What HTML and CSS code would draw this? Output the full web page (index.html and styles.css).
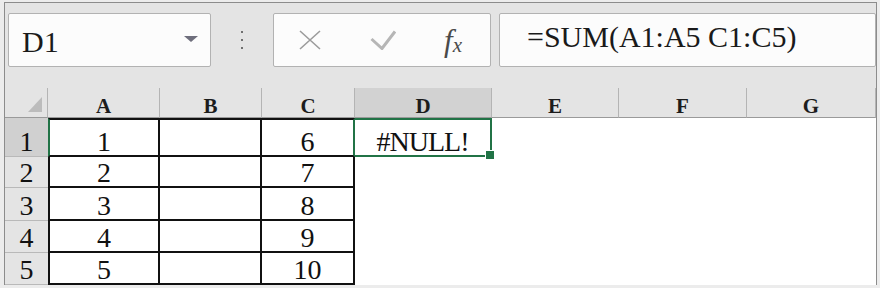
FILE: index.html
```html
<!DOCTYPE html>
<html lang="zh-CN">
  <head>
    <meta charset="UTF-8" />
    <meta name="viewport" content="width=device-width, initial-scale=1.0" />
    <title>#NULL! 错误</title>
    <link rel="stylesheet" href="styles.css">
  </head>
  <body>
    <div class="app">
      <!-- 编辑栏 -->
      <div class="toolbar">
        <div class="namebox">
          <span class="name">D1</span>
          <span class="caret"></span>
        </div>
        <div class="grip"><i></i><i></i><i></i></div>
        <div class="fxbox">
          <svg class="ico-x" width="22" height="20" viewBox="0 0 22 20">
            <path d="M1 1 L21 19 M21 1 L1 19" stroke="#9c9c9c" stroke-width="1.6" fill="none" />
          </svg>
          <svg class="ico-ok" width="26" height="20" viewBox="0 0 26 20">
            <polyline points="1.5,9 12,18.5 25,1.5" stroke="#b6b6b6" stroke-width="3" fill="none" />
          </svg>
          <span class="fx"><i>f</i><i class="sub">x</i></span>
        </div>
        <div class="formula">=SUM(A1:A5 C1:C5)</div>
      </div>

      <!-- 表格 -->
      <div class="sheet">
        <div class="ch corner"><span class="tri"></span></div>
        <div class="ch">A</div>
        <div class="ch">B</div>
        <div class="ch">C</div>
        <div class="ch on">D</div>
        <div class="ch">E</div>
        <div class="ch">F</div>
        <div class="ch">G</div>

        <div class="rh on">1</div>
        <div class="c top first hl">1</div>
        <div class="c top"></div>
        <div class="c top next-sel">6</div>
        <div class="e sel">#NULL!<span class="handle"></span></div>
        <div class="e"></div>
        <div class="e"></div>
        <div class="e"></div>

        <div class="rh">2</div>
        <div class="c first">2</div>
        <div class="c"></div>
        <div class="c">7</div>
        <div class="e"></div>
        <div class="e"></div>
        <div class="e"></div>
        <div class="e"></div>

        <div class="rh">3</div>
        <div class="c first">3</div>
        <div class="c"></div>
        <div class="c">8</div>
        <div class="e"></div>
        <div class="e"></div>
        <div class="e"></div>
        <div class="e"></div>

        <div class="rh">4</div>
        <div class="c first">4</div>
        <div class="c"></div>
        <div class="c">9</div>
        <div class="e"></div>
        <div class="e"></div>
        <div class="e"></div>
        <div class="e"></div>

        <div class="rh">5</div>
        <div class="c first">5</div>
        <div class="c"></div>
        <div class="c">10</div>
        <div class="e"></div>
        <div class="e"></div>
        <div class="e"></div>
        <div class="e"></div>
      </div>
    </div>
  </body>
</html>
```

FILE: styles.css
```css
body {
  margin: 0;
  background-color: #ececec;
  font-family: "Liberation Serif", serif;
  color: #111;
}

.app {
  margin: 2px 0 0 4px;
  width: 871px;
  border: 1px solid #8c8c8c;
  border-bottom: none;
  background-color: #e4e4e4;
}

/* 编辑栏 */
.toolbar {
  display: flex;
  align-items: flex-start;
  height: 85px;
  padding: 10px 0 0 3px;
  box-sizing: border-box;
}

.namebox {
  display: flex;
  align-items: flex-start;
  width: 203px;
  height: 54px;
  box-sizing: border-box;
  padding: 13px 12px 0 13px;
  background: #fcfcfc;
  border: 1px solid #b2b2b2;
  border-radius: 2px;
}

.name {
  font-size: 30px;
  line-height: 30px;
  color: #1a1a1a;
}

.caret {
  margin: 9px 0 0 auto;
  width: 0;
  height: 0;
  border-left: 7px solid transparent;
  border-right: 7px solid transparent;
  border-top: 6px solid #6e6e7c;
}

.grip {
  width: 62px;
  display: flex;
  flex-direction: column;
  align-items: center;
  gap: 6px;
  padding-top: 18px;
}

.grip i {
  width: 2px;
  height: 2px;
  background: #6f6f6f;
}

.fxbox {
  display: flex;
  align-items: center;
  width: 218px;
  height: 54px;
  box-sizing: border-box;
  padding-left: 25px;
  background: #fcfcfc;
  border: 1px solid #b2b2b2;
  border-radius: 2px;
}

.ico-ok {
  margin-left: 49px;
}

.fx {
  margin-left: 48px;
  color: #4a4a4a;
  line-height: 1;
}

.fx i {
  font-size: 31px;
  font-style: italic;
}

.fx .sub {
  font-size: 21px;
  margin-left: 0;
  position: relative;
  top: 1px;
}

.formula {
  flex: 1;
  margin-left: 8px;
  height: 54px;
  box-sizing: border-box;
  padding: 8px 0 0 27px;
  background: #fcfcfc;
  border: 1px solid #b2b2b2;
  border-radius: 2px;
  font-size: 30px;
  line-height: 30px;
  color: #1a1a1a;
}

/* 表格 */
.sheet {
  display: grid;
  grid-template-columns: 43px 112px 102px 93px 137px 127px 128px 129px;
  grid-template-rows: 30px 39px 31px 33px 32px 32px;
}

.sheet > div {
  box-sizing: border-box;
  display: flex;
  justify-content: center;
  align-items: flex-end;
}

.ch {
  font-weight: bold;
  font-size: 21px;
  line-height: 22px;
  color: #1c1c1c;
  border-right: 1px solid #b4b4b4;
  border-bottom: 1px solid #9a9a9a;
  background: #e4e4e4;
}

.ch.on {
  background: #d2d2d2;
}

.ch.corner {
  justify-content: flex-end;
  padding: 0 5px 5px 0;
}

.tri {
  width: 0;
  height: 0;
  border-left: 14px solid transparent;
  border-bottom: 15px solid #bcbcbc;
}

.rh {
  font-size: 28px;
  line-height: 27px;
  padding-bottom: 1px;
  background: #e4e4e4;
  border-bottom: 1px solid #b9b9b9;
}

.rh.on {
  background: #d0d0d0;
}

.c,
.e {
  font-size: 28px;
  line-height: 27px;
  background: #fff;
}

.c {
  border-right: 2px solid #111;
  border-bottom: 2px solid #111;
}

.c.top {
  border-top: 2px solid #111;
}

.c.first {
  border-left: 2px solid #111;
}

.c.first.hl {
  border-left-color: #217346;
}

.c.next-sel {
  border-right-color: #217346;
}

.e.sel {
  position: relative;
  letter-spacing: -1px;
  border: 2px solid #217346;
  border-left: none;
}

.handle {
  position: absolute;
  right: -5px;
  bottom: -5px;
  width: 8px;
  height: 8px;
  background: #217346;
  border: 1px solid #fff;
}
```
